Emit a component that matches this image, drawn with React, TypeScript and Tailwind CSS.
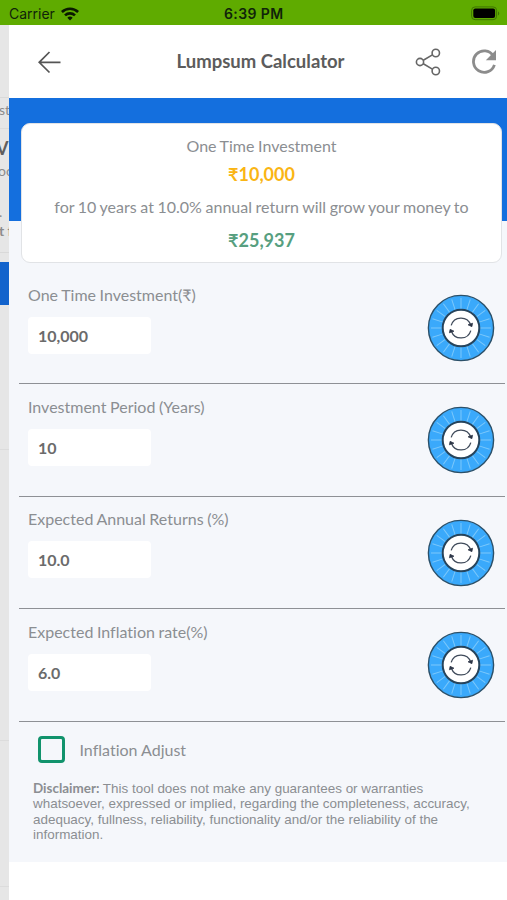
import React from 'react'

const fields = [
  { label: 'One Time Investment(₹)', value: '10,000' },
  { label: 'Investment Period (Years)', value: '10' },
  { label: 'Expected Annual Returns (%)', value: '10.0' },
  { label: 'Expected Inflation rate(%)', value: '6.0' },
]

const spokes = Array.from({ length: 20 }, (_, i) => i * 18)

function Dial() {
  return (
    <svg className="w-[68px] h-[68px]" viewBox="0 0 68 68" fill="none">
      <circle cx="34" cy="34" r="32.6" fill="#3aa9fb" stroke="#2b5069" strokeWidth="1.4" />
      {spokes.map((angle) => (
        <path key={angle} d="M34 4v11" stroke="#7cc8fb" strokeWidth="1" transform={`rotate(${angle} 34 34)`} />
      ))}
      <circle cx="34" cy="34" r="18.3" fill="#fff" stroke="#26445c" strokeWidth="2" />
      <path d="M24.2 31.4A10.2 10.2 0 0 1 43.6 30.8M43.8 36.6A10.2 10.2 0 0 1 24.4 37.2" stroke="#3f4a5a" strokeWidth="1.3" />
      <path d="M41 30.8l4.6-1.6-.7 3.5zM27 37.2l-4.6 1.6.7-3.5z" fill="#2b3445" stroke="#2b3445" strokeWidth=".7" />
    </svg>
  )
}

function StatusBar() {
  return (
    <div className="relative h-[25px] shrink-0 bg-[#5fab00] flex items-center justify-between pl-[9px] pr-[7px] pt-[2px] text-[#10240a]">
      <div className="flex items-center gap-[6px]">
        <span className="font-['Inter',sans-serif] text-[14px] leading-[18px]">Carrier</span>
        <svg className="w-[18px] h-[14px]" viewBox="0 0 18 14" fill="none" stroke="#0a1a00" strokeWidth="2.6">
          <path d="M.9 5a11.6 11.6 0 0 1 16.2 0M4 8.4a7.2 7.2 0 0 1 10 0" />
          <path d="M9 13.4L6.3 10.7a3.9 3.9 0 0 1 5.4 0z" fill="#0a1a00" stroke="none" />
        </svg>
      </div>
      <span className="absolute left-[224px] top-[5px] font-['Inter',sans-serif] font-semibold text-[14px] leading-[18px] tracking-[0.4px]">6:39 PM</span>
      <svg className="w-[29px] h-[15px]" viewBox="0 0 29 15">
        <rect x=".6" y=".9" width="25" height="12.8" rx="3.5" fill="none" stroke="#3f7500" />
        <rect x="2.3" y="2.6" width="21.8" height="9.4" rx="2" fill="#000" />
        <path d="M27 5.2a2.6 2.6 0 0 1 0 4.4z" fill="#3f7500" />
      </svg>
    </div>
  )
}

// Edge of the previous screen, still visible while this one slides in
function PreviousScreen() {
  return (
    <div className="w-[8.5px] shrink-0 overflow-hidden bg-[#e6e6e6] flex flex-col whitespace-nowrap text-[#8c8c8c] text-[14px] leading-[18px]">
      <div className="h-[73px] shrink-0 border-b border-[#d9d9d9]" />
      <div className="h-[31px] shrink-0 border-b border-[#dcdcdc] pt-[3px] -ml-px">st</div>
      <div className="h-[33px] shrink-0 pt-[8px] -ml-[4px] text-[18px] leading-[23px] font-bold text-[#5f5f5f]">V</div>
      <div className="h-[41px] shrink-0 -ml-[2px]">oo</div>
      <div className="h-[18px] shrink-0 -ml-px">.</div>
      <div className="h-[32px] shrink-0 pt-px font-bold border-b border-[#d9d9d9] -ml-px">t f</div>
      <div className="h-[43px] mt-[9px] shrink-0 bg-[#1263cc]" />
      <div className="h-[145px] shrink-0 border-b border-[#dcdcdc]" />
      <div className="h-[291px] shrink-0 border-b border-[#dcdcdc]" />
      <div className="h-[146px] shrink-0 border-b border-[#dcdcdc]" />
    </div>
  )
}

export default function App() {
  return (
    <div className="w-[507px] h-[900px] overflow-hidden flex flex-col bg-white font-['Lato',sans-serif] text-[#8b8e92] [font-variant-ligatures:none]">
      <StatusBar />

      <div className="flex flex-1 min-h-0">
        <PreviousScreen />

        <div className="flex-1 min-w-0 flex flex-col">
          <header className="h-[73px] shrink-0 bg-white flex items-center pl-[29px] pr-[10px]">
            <svg className="w-6 h-6" viewBox="0 0 24 24" fill="none" stroke="#555" strokeWidth="1.7">
              <path d="M22.5 12.3H1.2M11.5 2L1.2 12.3l10.3 10.2" />
            </svg>
            <h1 className="ml-[115px] text-[18.5px] font-bold text-[#5c5c5c] whitespace-nowrap">Lumpsum Calculator</h1>
            <div className="ml-auto flex items-center gap-[29px]">
              <svg className="w-[27px] h-7" viewBox="0 0 27 28" fill="none" stroke="#666" strokeWidth="1.6">
                <path d="M8.3 12.2l9.1-5.3M8.3 15.8l9.1 5.3" />
                <circle cx="5" cy="14" r="3.6" />
                <circle cx="20.8" cy="5" r="3.7" />
                <circle cx="20.8" cy="23" r="3.7" />
              </svg>
              <svg className="w-[26px] h-[26px]" viewBox="0 0 26 26" fill="none">
                <path d="M22.3 7A10.7 10.7 0 1 0 23.4 15.8" stroke="#8c8c8c" strokeWidth="2.8" />
                <path d="M25 1v10.2H14.8z" fill="#8c8c8c" />
              </svg>
            </div>
          </header>

          <main className="h-[764px] shrink-0 bg-[#f5f7fb]">
            <div className="h-[122.5px] bg-[#146fde] pt-[25px] pl-[12.5px] pr-[5px]">
              <div className="h-[139.5px] bg-white rounded-[9px] border border-[#e1e3e6] flex flex-col items-center text-center text-[16px] leading-[20px] pt-[12px]">
                <p className="[word-spacing:-0.5px]">One Time Investment</p>
                <p className="mt-[8px] text-[18px] font-bold text-[#fab514]">₹10,000</p>
                <p className="mt-[13px] whitespace-nowrap [word-spacing:-0.5px]">for 10 years at 10.0% annual return will grow your money to</p>
                <p className="mt-[13px] text-[18px] font-bold text-[#579f80]">₹25,937</p>
              </div>
            </div>

            <div className="pt-[51.5px] pl-[10px] pr-[2px]">
              {fields.map((field) => (
                <div key={field.label} className="h-[112.4px] border-b-[1.5px] border-[#8e9095] flex justify-between pl-[9.5px] pr-[10px]">
                  <div className="pt-[12.5px]">
                    <label className="block text-[16px] leading-[20px] whitespace-nowrap [word-spacing:-0.5px]">{field.label}</label>
                    <input
                      readOnly
                      value={field.value}
                      className="mt-[12px] block w-[123px] h-[37px] rounded-[4px] bg-white pl-[10px] text-[16px] font-bold text-[#6b6b6b] outline-none"
                    />
                  </div>
                  <div className="pt-[22px]">
                    <Dial />
                  </div>
                </div>
              ))}

              <div className="flex items-center gap-[15px] pl-[19px] pt-[14.5px]">
                <span className="w-[27px] h-[27px] rounded-[4px] border-[3px] border-[#11936c]" />
                <span className="text-[16px] leading-[20px]">Inflation Adjust</span>
              </div>

              <p className="mt-[18px] ml-[14.5px] w-[465px] whitespace-nowrap font-['Liberation_Sans',sans-serif] text-[13.45px] leading-[15.4px]">
                <strong className="font-['Lato',sans-serif] font-bold">Disclaimer:</strong> This tool does not make any guarantees or warranties
                <br />
                whatsoever, expressed or implied, regarding the completeness, accuracy,
                <br />
                adequacy, fullness, reliability, functionality and/or the reliability of the
                <br />
                information.
              </p>
            </div>
          </main>
        </div>
      </div>
    </div>
  )
}
